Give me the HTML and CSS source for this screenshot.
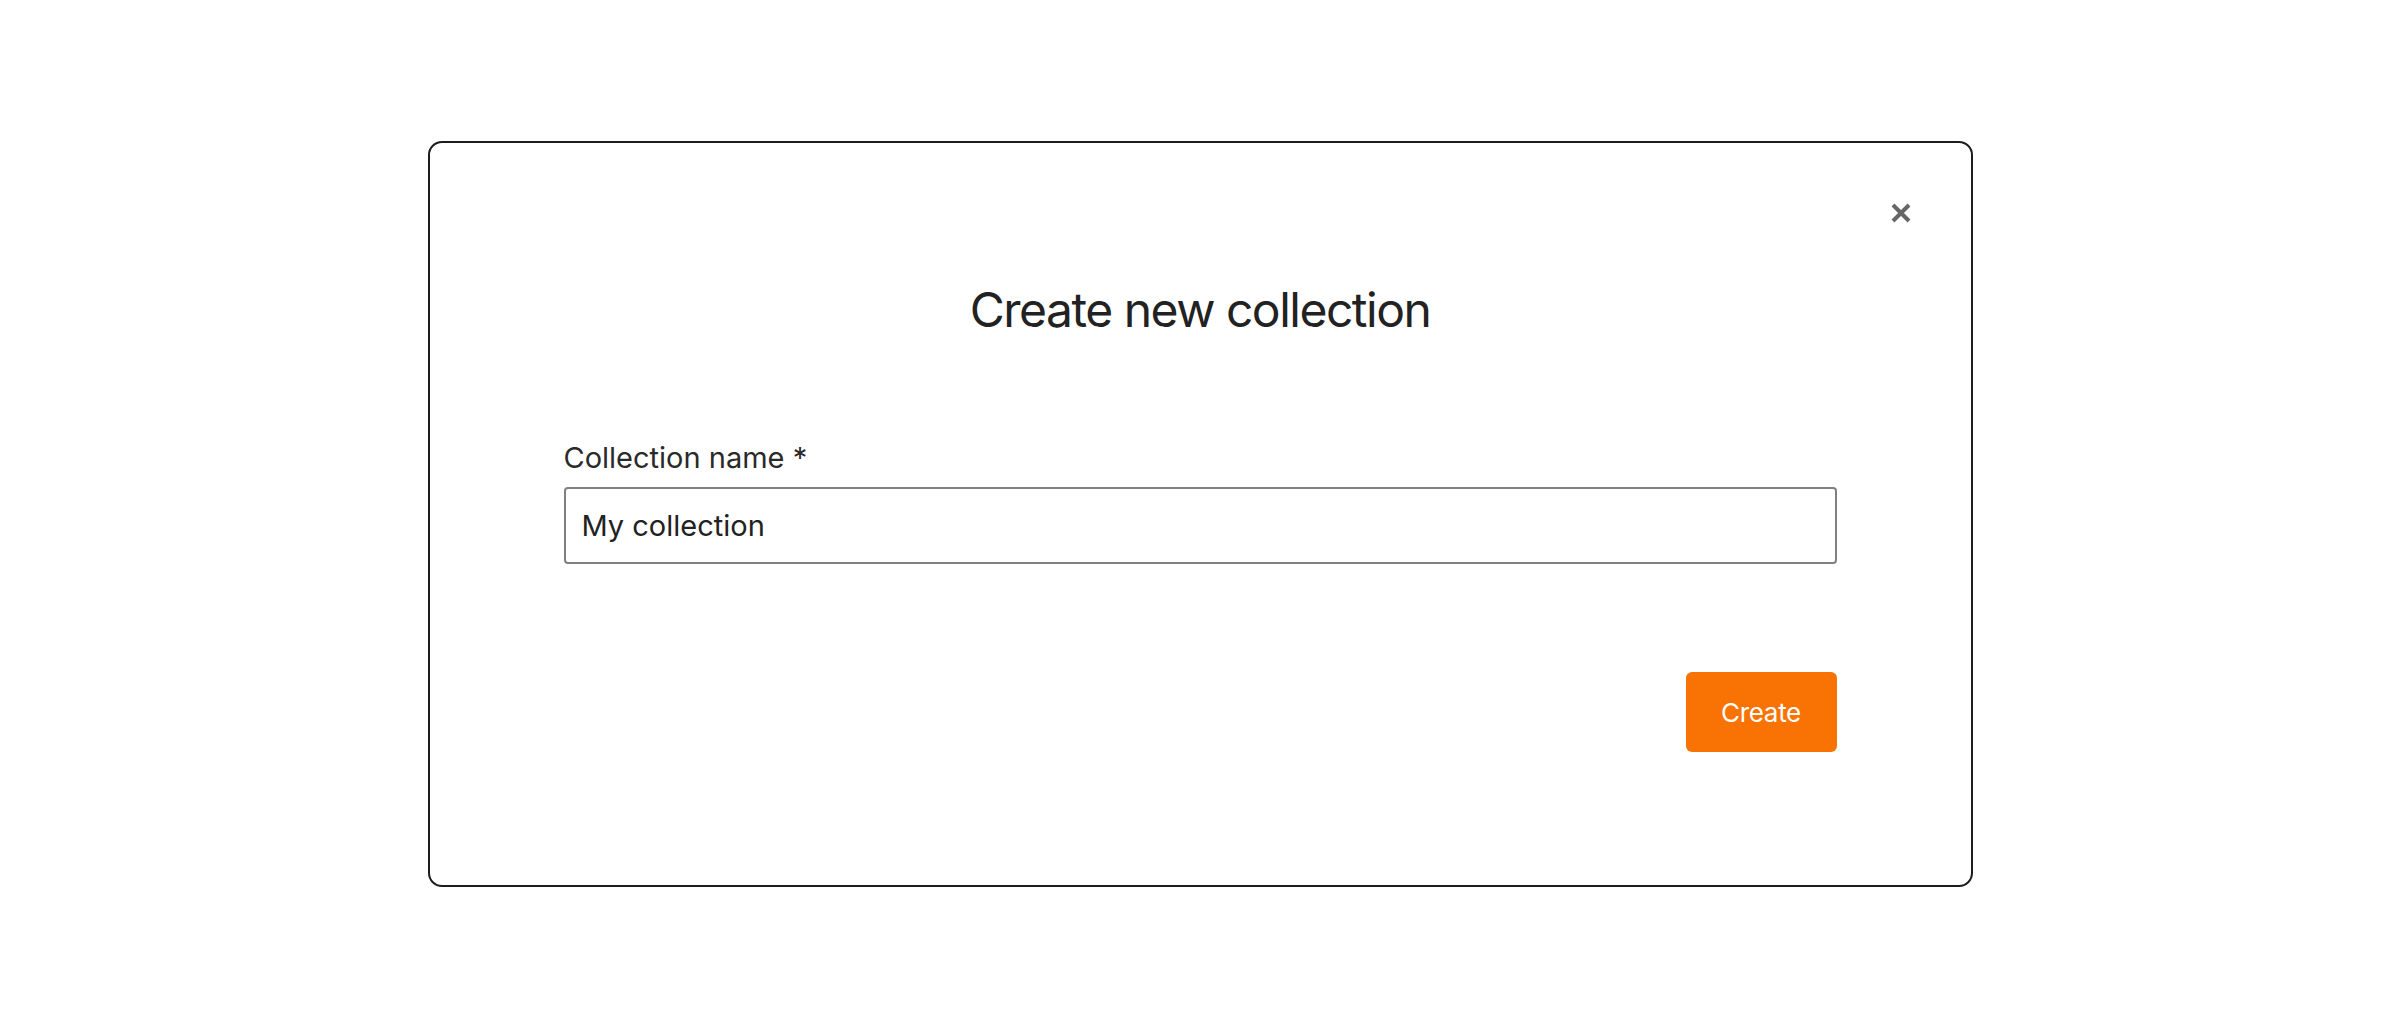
FILE: index.html
```html
<!DOCTYPE html>
<html lang="en">

<head>
  <meta charset="UTF-8">
  <meta name="viewport" content="width=device-width, initial-scale=1.0">
  <title>Create new collection</title>
  <link rel="stylesheet" href="styles.css">
</head>

<body>

  <div class="modal">
    <button class="closeButton" aria-label="Close">
      <svg width="22" height="22" viewBox="0 0 22 22">
        <path d="M3 3 L19 19 M19 3 L3 19" stroke="#666" stroke-width="4" stroke-linecap="butt" fill="none" />
      </svg>
    </button>

    <h1 class="title">Create new collection</h1>

    <label class="fieldLabel" for="collectionName">Collection name *</label>
    <input type="text" id="collectionName" class="fieldInput" value="My collection" />

    <div class="actions">
      <button class="createButton">Create</button>
    </div>
  </div>

</body>

</html>
```

FILE: styles.css
```css
html,
body {
  margin: 0;
  height: 100%;
}

body {
  background-color: #fff;
  color: #222;
  font-family: Inter, "Noto Sans", sans-serif;
  display: flex;
  align-items: center;
  justify-content: center;
}

.modal {
  position: relative;
  box-sizing: border-box;
  width: 1545px;
  border: 2px solid #1c1c1c;
  border-radius: 14px;
  padding: 138px 134px 133px;
  display: flex;
  flex-direction: column;
}

.closeButton {
  position: absolute;
  top: 48px;
  right: 48px;
  width: 44px;
  height: 44px;
  padding: 0;
  border: none;
  background: none;
  display: flex;
  align-items: center;
  justify-content: center;
  cursor: pointer;
}

.title {
  margin: 0 0 101px;
  font-size: 48px;
  font-weight: 400;
  letter-spacing: -1.5px;
  line-height: 58px;
  text-align: center;
  color: #222;
}

.fieldLabel {
  font-size: 29px;
  line-height: 35px;
  margin-bottom: 12px;
  color: #2a2a2a;
}

.fieldInput {
  box-sizing: border-box;
  height: 77px;
  width: 100%;
  border: 2px solid #808080;
  border-radius: 4px;
  padding: 0 16px;
  font-family: inherit;
  font-size: 29px;
  color: #222;
  outline: none;
}

.actions {
  display: flex;
  justify-content: flex-end;
  margin-top: 108px;
}

.createButton {
  width: 151px;
  height: 80px;
  border: none;
  border-radius: 6px;
  background-color: #f87304;
  color: #fff;
  font-family: inherit;
  font-size: 26px;
  font-weight: 400;
  letter-spacing: -0.3px;
  cursor: pointer;
}
```
